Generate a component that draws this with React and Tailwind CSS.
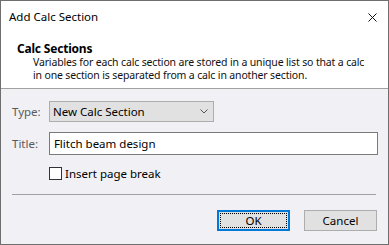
import React from 'react';

const font = { fontFamily: '"Noto Sans", "Segoe UI", sans-serif' };

export default function App() {
  return (
    <div
      className="w-[389px] h-[245px] border border-[#6e6e6e] bg-[#f0f0f5] flex flex-col text-[11.5px] text-black overflow-hidden whitespace-nowrap"
      style={font}
    >
      {/* title bar */}
      <div className="h-[32px] bg-white flex items-center justify-between pl-[8px] pr-[10px] shrink-0">
        <span className="text-[11.5px] leading-[16px]">Add Calc Section</span>
        <svg width="9" height="9" viewBox="0 0 9 9" className="mr-[1px]">
          <path d="M0.5 0.5 L8.5 8.5 M8.5 0.5 L0.5 8.5" stroke="#111" strokeWidth="1" />
        </svg>
      </div>

      {/* header */}
      <div className="h-[56px] bg-white border-b border-[#a0a0a0] pl-[16px] pt-[8px] shrink-0">
        <div className="font-bold text-[12px] leading-[15px] tracking-[-0.2px]">Calc Sections</div>
        <div className="pl-[16px] text-[10.5px] leading-[13px] tracking-[-0.15px] text-[#111]">
          <div>Variables for each calc section are stored in a unique list so that a calc</div>
          <div>in one section is separated from a calc in another section.</div>
        </div>
      </div>

      {/* body */}
      <div className="flex flex-col pl-[11px] pr-[10px] pt-[12px]">
        <div className="flex items-center h-[21px]">
          <span className="w-[37px] text-[#5a5a5a]">Type:</span>
          <div className="w-[165px] h-[21px] bg-[#e1e1e1] border border-[#adadad] flex items-center justify-between pl-[3px] pr-[5px]">
            <span>New Calc Section</span>
            <svg width="8" height="5" viewBox="0 0 8 5">
              <path d="M0.5 0.5 L4 4 L7.5 0.5" fill="none" stroke="#555" strokeWidth="1" />
            </svg>
          </div>
        </div>

        <div className="flex items-center h-[23px] mt-[10px]">
          <span className="w-[37px] text-[#5a5a5a]">Title:</span>
          <div className="w-[330px] h-[23px] bg-white border border-[#7a7a7a] flex items-center pl-[4px]">
            Flitch beam design
          </div>
        </div>

        <label className="flex items-center h-[13px] leading-[13px] mt-[12px] ml-[37px]">
          <span className="w-[13px] h-[13px] border border-[#333] bg-white shrink-0" />
          <span className="ml-[3px]">Insert page break</span>
        </label>

        <div className="mt-[14px] mr-[2px] border-t border-[#a0a0a0]" />

        <div className="flex justify-end gap-[14px] mt-[15px] mr-[1px]">
          <button className="w-[73px] h-[21px] bg-[#e1e1e1] border-2 border-[#0078d7] p-[1px]">
            <span className="flex items-center justify-center w-full h-full border border-dotted border-black">
              OK
            </span>
          </button>
          <button className="w-[73px] h-[21px] bg-[#e1e1e1] border border-[#adadad]">
            Cancel
          </button>
        </div>
      </div>
    </div>
  );
}
